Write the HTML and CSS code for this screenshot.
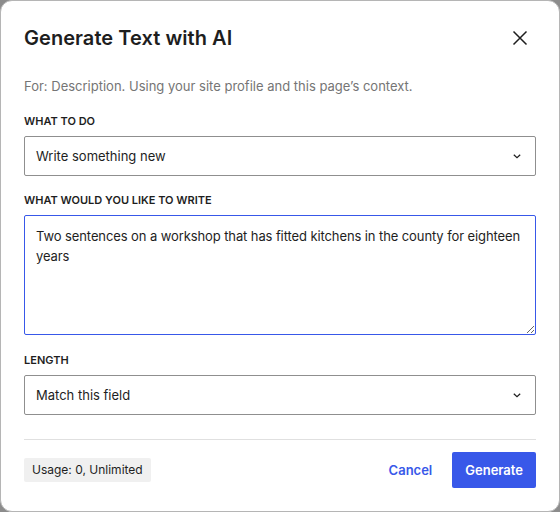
FILE: index.html
```html
<!DOCTYPE html>
<html>
<head>
<meta charset="utf-8">
<link rel="stylesheet" href="styles.css">
</head>
<body>
<div class="dialog">
  <div class="header">
    <h1 class="title">Generate Text with AI</h1>
    <button class="close" aria-label="Close">
      <svg width="16" height="16" viewBox="0 0 16 16"><path d="M1.5 1.5 L14.5 14.5 M14.5 1.5 L1.5 14.5" stroke="#1e1e1e" stroke-width="1.5" fill="none"/></svg>
    </button>
  </div>
  <p class="subtitle">For: Description. Using your site profile and this page’s context.</p>

  <div class="field">
    <div class="label">What to do</div>
    <div class="select"><span>Write something new</span><svg class="chev" width="8" height="5" viewBox="0 0 8 5"><path d="M0.8 0.8 L4 3.8 L7.2 0.8" stroke="#1e1e1e" stroke-width="1.2" fill="none"/></svg></div>
  </div>

  <div class="field field-text">
    <div class="label">What would you like to write</div>
    <textarea class="textarea">Two sentences on a workshop that has fitted kitchens in the county for eighteen years</textarea>
  </div>

  <div class="field">
    <div class="label">Length</div>
    <div class="select"><span>Match this field</span><svg class="chev" width="8" height="5" viewBox="0 0 8 5"><path d="M0.8 0.8 L4 3.8 L7.2 0.8" stroke="#1e1e1e" stroke-width="1.2" fill="none"/></svg></div>
  </div>

  <div class="footer">
    <span class="usage">Usage: 0, Unlimited</span>
    <div class="actions">
      <button class="cancel">Cancel</button>
      <button class="generate">Generate</button>
    </div>
  </div>
</div>
</body>
</html>
```
FILE: styles.css
```css
* { box-sizing: border-box; }
html, body { margin: 0; padding: 0; }
body {
  background: #8c8c8c;
  font-family: Inter, "Noto Sans", sans-serif;
  color: #1e1e1e;
  width: 560px;
  height: 512px;
  overflow: hidden;
}
.dialog {
  width: 560px;
  height: 512px;
  background: #fff;
  border-radius: 12px;
  border: 1px solid #b5b5b5;
  padding: 0 23px;
  display: flex;
  flex-direction: column;
}
.header {
  display: flex;
  justify-content: space-between;
  align-items: flex-start;
  padding-top: 23px;
  height: 75px;
}
.title {
  margin: 0;
  font-size: 20px;
  line-height: 28px;
  font-weight: 600;
  letter-spacing: 0.05px;
}
.close {
  border: 0;
  background: none;
  padding: 0;
  margin: 6px 8px 0 0;
  width: 16px;
  height: 16px;
  display: flex;
}
.subtitle {
  margin: 0 0 17px;
  font-size: 13px;
  line-height: 20px;
  color: #757575;
}
.field {
  display: flex;
  flex-direction: column;
  margin-bottom: 16px;
}
.field-text { margin-bottom: 17px; }
.label {
  font-size: 11px;
  line-height: 16px;
  font-weight: 600;
  text-transform: uppercase;
  margin-bottom: 7px;
}
.select {
  height: 40px;
  border: 1px solid #8f8f8f;
  border-radius: 2px;
  display: flex;
  align-items: center;
  justify-content: space-between;
  padding: 0 14px 0 11px;
  font-size: 13px;
}
.chev { margin-top: 1px; }
.textarea {
  height: 120px;
  border: 1.5px solid #3858e9;
  border-radius: 2px;
  padding: 10px 6px 10px 11px;
  font-family: inherit;
  font-size: 13px;
  line-height: 20px;
  letter-spacing: -0.1px;
  color: #1e1e1e;
  resize: vertical;
  outline: none;
}
.footer {
  margin-top: 8px;
  border-top: 1px solid #e0e0e0;
  padding-top: 12px;
  display: flex;
  align-items: center;
  justify-content: space-between;
}
.usage {
  background: #f0f0f0;
  font-size: 12px;
  line-height: 24px;
  padding: 0 8px;
  border-radius: 2px;
  color: #1e1e1e;
}
.actions {
  display: flex;
  align-items: center;
  gap: 12px;
}
button { font-family: inherit; cursor: pointer; }
.cancel {
  background: none;
  border: 0;
  color: #3858e9;
  font-size: 13px;
  font-weight: 600;
  padding: 0 8px;
  height: 36px;
}
.generate {
  background: #3858e9;
  color: #fff;
  border: 0;
  border-radius: 2px;
  font-size: 13px;
  font-weight: 600;
  height: 36px;
  padding: 0 13px;
}
```
